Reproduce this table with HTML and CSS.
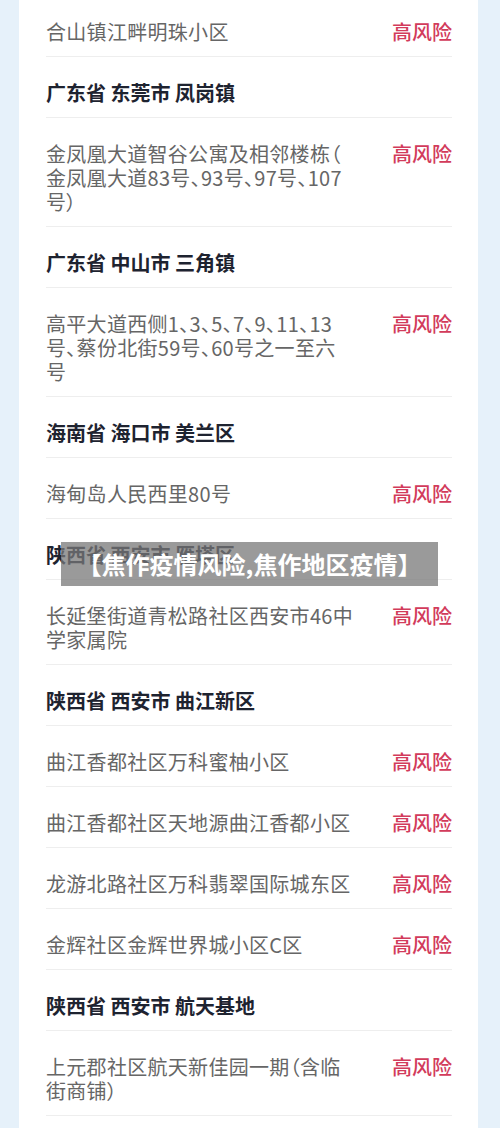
FILE: index.html
```html
<!DOCTYPE html>
<html lang="zh-CN">

<head>
    <meta charset="UTF-8" />
    <meta name="viewport" content="width=device-width, initial-scale=1.0" />
    <title>焦作疫情风险</title>
    <link rel="stylesheet" href="styles.css">
</head>

<body>
    <div class="card">
        <div class="row">
            <div class="place">合山镇江畔明珠小区</div>
            <div class="level">高风险</div>
        </div>
        <div class="row area">广东省 东莞市 凤岗镇</div>
        <div class="row">
            <div class="place">金凤凰大道智谷公寓及相邻楼栋（<br>金凤凰大道83号、93号、97号、107<br>号）</div>
            <div class="level">高风险</div>
        </div>
        <div class="row area">广东省 中山市 三角镇</div>
        <div class="row">
            <div class="place">高平大道西侧1、3、5、7、9、11、13<br>号、蔡份北街59号、60号之一至六<br>号</div>
            <div class="level">高风险</div>
        </div>
        <div class="row area">海南省 海口市 美兰区</div>
        <div class="row">
            <div class="place">海甸岛人民西里80号</div>
            <div class="level">高风险</div>
        </div>
        <div class="row area">陕西省 西安市 雁塔区</div>
        <div class="row">
            <div class="place">长延堡街道青松路社区西安市46中<br>学家属院</div>
            <div class="level">高风险</div>
        </div>
        <div class="row area">陕西省 西安市 曲江新区</div>
        <div class="row">
            <div class="place">曲江香都社区万科蜜柚小区</div>
            <div class="level">高风险</div>
        </div>
        <div class="row">
            <div class="place">曲江香都社区天地源曲江香都小区</div>
            <div class="level">高风险</div>
        </div>
        <div class="row">
            <div class="place">龙游北路社区万科翡翠国际城东区</div>
            <div class="level">高风险</div>
        </div>
        <div class="row">
            <div class="place">金辉社区金辉世界城小区C区</div>
            <div class="level">高风险</div>
        </div>
        <div class="row area">陕西省 西安市 航天基地</div>
        <div class="row">
            <div class="place">上元郡社区航天新佳园一期（含临<br>街商铺）</div>
            <div class="level">高风险</div>
        </div>
    </div>

    <div class="banner">【焦作疫情风险,焦作地区疫情】</div>
</body>

</html>
```

FILE: styles.css
```css
body {
    font-family: "Noto Sans CJK SC", "Noto Sans", sans-serif;
    background-color: #e6f1fa;
    margin: 0;
    padding: 0;
    height: 1128px;
    overflow: hidden;
    position: relative;
}

.card {
    background-color: #ffffff;
    margin: -4px 22px 0 19px;
    padding: 0 26px 40px 27px;
}

.row {
    display: flex;
    align-items: flex-start;
    padding: 24px 0 12px;
    border-bottom: 1px solid #eeeeee;
    font-size: 20px;
    line-height: 24px;
}

.place {
    width: 320px;
    color: #666666;
    white-space: nowrap;
    font-feature-settings: "palt";
    letter-spacing: 0.3px;
}

.level {
    margin-left: auto;
    color: #d23b5b;
    font-weight: 500;
}

.area {
    color: #1e2330;
    font-weight: 700;
}

.banner {
    position: absolute;
    top: 542px;
    left: 61px;
    width: 377px;
    height: 44px;
    background-color: rgba(120, 120, 120, 0.75);
    color: #ffffff;
    font-size: 24px;
    font-weight: 700;
    line-height: 44px;
    text-align: center;
    white-space: nowrap;
}
```
